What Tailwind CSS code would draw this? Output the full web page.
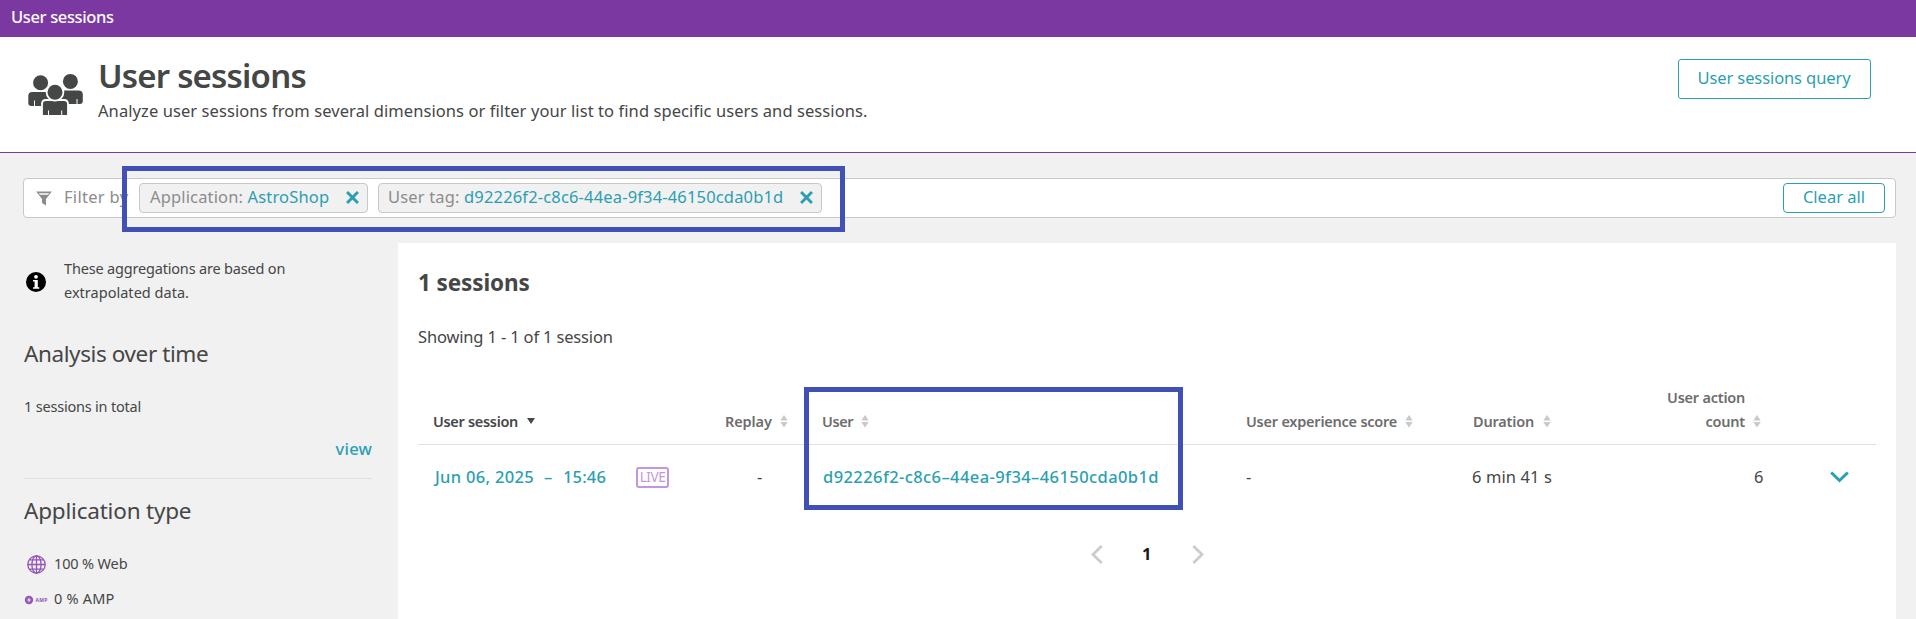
<!DOCTYPE html>
<html lang="en">
<head>
<meta charset="utf-8">
<title>User sessions</title>
<script src="https://cdn.jsdelivr.net/npm/@tailwindcss/browser@4"></script>
</head>
<body class="relative h-[619px] w-[1916px] overflow-hidden bg-[#f1f1f1] font-['Noto_Sans',sans-serif] text-[#454646]">
<svg class="hidden">
  <symbol id="sort" viewBox="0 0 8 13"><path d="M4 0 7.700 5.600H.3zM4 12.600 7.700 7.100H.3z" fill="#c9c9c9"/></symbol>
  <symbol id="cross" viewBox="0 0 12 12"><path d="M1 1 11 11M11 1 1 11" stroke="#2a9fb3" stroke-width="2.700" fill="none"/></symbol>
</svg>

<!-- Breadcrumb bar -->
<div class="flex h-[37px] items-start bg-[#7c38a1] pl-[11px] text-[16.5px] leading-[34px] font-medium tracking-[-0.36px] text-white">User sessions</div>

<!-- Page header -->
<header class="flex h-[116px] justify-between border-b border-[#7c38a1] bg-white pr-[45px] pl-[27px]">
  <div class="flex">
    <svg class="mt-[36px] h-[43px] w-[57px]" viewBox="27 73 57 43">
      <g fill="#454646">
        <circle cx="40.600" cy="82.800" r="7.500"/>
        <path d="M32.300 92H50v14H35v-5.500h-1V106h-2.500q-3.200 0-3.200-3V96q0-4 4-4z"/>
        <circle cx="70.400" cy="81.400" r="7.500"/>
        <path d="M60 90.500h18.500q4.300 0 4.300 4v6.500q0 3-3 3H77.500v-5h-1v5H60z"/>
      </g>
      <g fill="#454646" stroke="#fff" stroke-width="1.800">
        <path d="M42 116v-12q0-4 4-4h18q4 0 4 4v12z"/>
        <circle cx="55" cy="92.200" r="8.400"/>
      </g>
      <path d="M48.500 110.500v5M61.700 110.500v5" stroke="#fff"/>
      <path d="M41 115.500h28" stroke="#fff"/>
    </svg>
    <div class="ml-[13px]">
      <h1 class="mt-[16px] h-[45px] pl-px text-[33px] leading-[45px] font-semibold tracking-[-0.8px]">User sessions</h1>
      <p class="pt-px pl-[1px] text-[16.5px] leading-[24px] tracking-[0.08px]">Analyze user sessions from several dimensions or filter your list to find specific users and sessions.</p>
    </div>
  </div>
  <button class="mt-[22px] h-[40px] w-[193px] rounded-[3px] border border-[#2a9fb3] pr-px pb-[2px] text-[16.5px] leading-[34px] tracking-[-0.1px] text-[#2a9fb3]">User sessions query</button>
</header>

<!-- Filter bar -->
<div class="mt-[25px] mr-[20px] ml-[23px] flex h-[40px] items-center rounded-[4px] border border-[#c8c8c8] bg-white pr-[10px] pl-[12px] text-[16.5px] leading-[24px] text-[#8c8c8c]">
  <svg class="h-[15px] w-[16px]" viewBox="0 0 16 15"><path d="M.2.500h15.600L10 8v6.500L6 12V8zM2.800 2.200l1.200 1.500h8l1.200-1.500z" fill="#8c8c8c" fill-rule="evenodd"/></svg>
  <span class="ml-[12px] w-[75px] pb-[3px] tracking-[0.3px]">Filter by</span>
  <div class="flex h-[30px] w-[229px] items-center justify-between rounded-[4px] border border-[#c8c8c8] bg-[#f1f1f1] pr-[8px] pl-[10px]">
    <span class="pb-[3px] tracking-[0.15px]">Application: <span class="text-[#2a9fb3]">AstroShop</span></span>
    <svg class="mb-px h-[13px] w-[13px]"><use href="#cross"/></svg>
  </div>
  <div class="ml-[10px] flex h-[30px] w-[444px] items-center justify-between rounded-[4px] border border-[#c8c8c8] bg-[#f1f1f1] pr-[8px] pl-[9px]">
    <span class="pb-[3px] tracking-[0.16px]">User tag: <span class="text-[#2a9fb3]">d92226f2-c8c6-44ea-9f34-46150cda0b1d</span></span>
    <svg class="mb-px h-[13px] w-[13px]"><use href="#cross"/></svg>
  </div>
  <button class="ml-auto h-[30px] w-[102px] rounded-[4px] border border-[#2a9fb3] pb-[2px] leading-[24px] text-[#2a9fb3]">Clear all</button>
</div>

<div class="mt-[25px] flex h-[376px]">
  <!-- Sidebar -->
  <aside class="w-[398px] pr-[26px] pl-[24px]">
    <div class="flex pt-[13px] pl-[2px]">
      <svg class="mt-[16px] h-[20px] w-[20px]" viewBox="0 0 20 20">
        <circle cx="10" cy="10" r="10" fill="#000"/>
        <circle cx="10" cy="4.800" r="1.900" fill="#fff"/>
        <path d="M7 8h4.800v7.200H13.300v1.500H7v-1.500h1.600V9.500H7z" fill="#fff"/>
      </svg>
      <p class="ml-[18px] text-[14.5px] leading-[24px] tracking-[-0.18px]">These aggregations are based on<br><span class="tracking-[0.02px]">extrapolated data.</span></p>
    </div>
    <h2 class="mt-[34px] h-[32px] text-[22.5px] leading-[32px] tracking-[-0.4px]">Analysis over time</h2>
    <p class="mt-[22px] h-[24px] text-[14.5px] leading-[28px] tracking-[-0.2px]">1 sessions in total</p>
    <div class="mt-[16px] h-[47px] border-b border-[#e0e0e0] text-right text-[16.5px] leading-[34px] font-medium tracking-[0.2px] text-[#2a9fb3]">view</div>
    <h2 class="mt-[15px] h-[32px] text-[22.5px] leading-[34px] tracking-[-0.2px]">Application type</h2>
    <div class="mt-[25px] flex h-[24px] items-center">
      <svg class="mt-[4px] ml-[2px] h-[20px] w-[20px]" viewBox="0 0 20 20" fill="none" stroke="#9355b7" stroke-width="1.300">
        <circle cx="10.500" cy="9.500" r="8.700"/><ellipse cx="10.500" cy="9.500" rx="4.600" ry="8.700"/><path d="M10.500.800v17.400M1.800 9.500h17.400M3.300 4.900h14.400M3.300 14.100h14.400"/>
      </svg>
      <span class="ml-[8px] text-[14.5px] leading-[24px] tracking-[-0.15px]">100 % Web</span>
    </div>
    <div class="mt-[11px] flex h-[24px] items-center">
      <svg class="mt-[4px] h-[10px] w-[10px]" viewBox="0 0 10 10"><circle cx="5" cy="5" r="4.200" fill="#9355b7"/><path d="M5.500 2.300 3 5.500h1.700L4.500 7.700 7 4.600H5.300z" fill="#f1f1f1"/></svg>
      <span class="mt-[4px] ml-[1.5px] w-[14px] text-[5px] leading-[8px] font-bold tracking-[0.3px] text-[#9355b7]">AMP</span>
      <span class="ml-[4.5px] text-[14.5px] leading-[24px] tracking-[0.2px]">0 % AMP</span>
    </div>
  </aside>

  <!-- Sessions panel -->
  <main class="w-[1498px] bg-white px-[20px] pt-[24px]">
    <h2 class="h-[32px] text-[22.5px] leading-[32px] font-bold tracking-[-0.1px]">1 sessions</h2>
    <p class="mt-[25px] h-[26px] text-[16.5px] leading-[26px] tracking-[-0.16px]">Showing 1 - 1 of 1 session</p>

    <div class="mt-[35px] grid h-[60px] grid-cols-[292px_97px_424px_227px_174px_1fr] items-end border-b border-[#e0e0e0] pb-[13px] pl-[15px] text-[14.5px] leading-[24px] font-semibold text-[#6d6d6d]">
      <div class="flex items-center text-[#454646]"><span class="tracking-[-0.31px]">User session</span>
        <svg class="ml-[9px] h-[6px] w-[8px]" viewBox="0 0 8 6"><path d="M0 0h8L4 6z" fill="#454646"/></svg></div>
      <div class="flex items-center"><span class="tracking-[-0.1px]">Replay</span><svg class="ml-[8px] h-[13px] w-[8px]"><use href="#sort"/></svg></div>
      <div class="flex items-center"><span class="tracking-[-0.4px]">User</span><svg class="ml-[8px] h-[13px] w-[8px]"><use href="#sort"/></svg></div>
      <div class="flex items-center"><span class="tracking-[-0.23px]">User experience score</span><svg class="ml-[8px] h-[13px] w-[8px]"><use href="#sort"/></svg></div>
      <div class="flex items-center"><span class="tracking-[-0.2px]">Duration</span><svg class="ml-[9px] h-[13px] w-[8px]"><use href="#sort"/></svg></div>
      <div class="flex w-[114px] items-end justify-end"><span class="text-right tracking-[-0.23px]">User action<br>count</span><svg class="mb-[5px] ml-[8px] h-[13px] w-[8px]"><use href="#sort"/></svg></div>
    </div>

    <div class="grid h-[66px] grid-cols-[201px_121px_66px_423px_226px_282px_76px_1fr] items-center pb-[2px] pl-[17px] text-[16.5px] leading-[24px]">
      <div class="flex pb-px font-medium whitespace-nowrap text-[#2a9fb3]"><span class="w-[109px] tracking-[0.32px]">Jun 06, 2025</span><span class="w-[19px]">–</span><span class="tracking-[0.15px]">15:46</span></div>
      <div class="h-[21px] w-[33px] rounded-[3px] border-2 border-[#c396e0] text-center text-[13.5px] leading-[17px] tracking-[-0.4px] text-[#c396e0]">LIVE</div>
      <div class="pb-px">-</div>
      <div class="pb-px font-medium tracking-[0.41px] text-[#2a9fb3]">d92226f2-c8c6–44ea-9f34–46150cda0b1d</div>
      <div class="pb-px">-</div>
      <div class="pb-px tracking-[0.1px]">6 min 41 s</div>
      <div class="pb-px">6</div>
      <svg class="h-[12px] w-[19px]" viewBox="0 0 19 12"><path d="M1.200 1.500 9.500 9.500 17.800 1.500" fill="none" stroke="#2a9fb3" stroke-width="3"/></svg>
    </div>

    <div class="mt-[32px] flex h-[22px] items-center pl-[673px]">
      <svg class="h-[19px] w-[12px]" viewBox="0 0 12 19"><path d="M10.700 1 1.900 9.500l8.800 8.500" fill="none" stroke="#ccc" stroke-width="2.800"/></svg>
      <span class="mb-px ml-[39px] w-[50px] text-[16.5px] leading-[22px] font-bold text-[#1a1a1a]">1</span>
      <svg class="h-[19px] w-[12px]" viewBox="0 0 12 19"><path d="M1.300 1l8.800 8.500L1.300 18" fill="none" stroke="#ccc" stroke-width="2.800"/></svg>
    </div>
  </main>
</div>

<!-- Highlight frames over the page -->
<div class="absolute top-[166px] left-[122px] h-[66px] w-[723px] border-[5px] border-[#4050b5]"></div>
<div class="absolute top-[387px] left-[804px] h-[123px] w-[379px] border-[5px] border-[#4050b5]"></div>
</body>
</html>
